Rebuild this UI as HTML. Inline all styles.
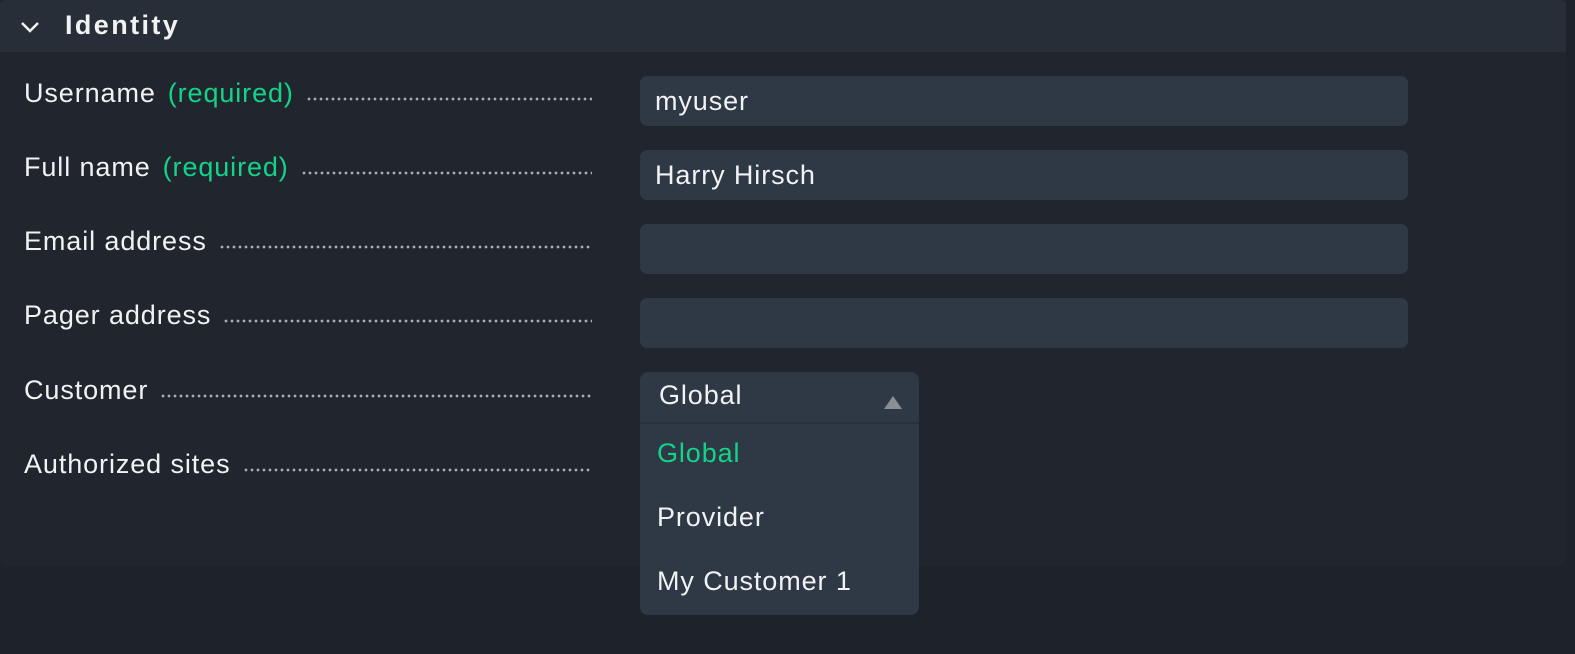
<!DOCTYPE html>
<html><head><style>
body{margin:0;width:1575px;height:654px;background:#1e2229;font-family:"Liberation Sans",sans-serif;color:#f0f2f4;overflow:hidden;position:relative}
.panel{position:absolute;left:0;top:0;width:1566px;height:566px;background:#21262e;border-radius:0 0 8px 8px}
.hdr{position:absolute;left:0;top:0;width:1566px;height:52px;background:#282e38;border-radius:6px 6px 0 0}
.hdr span{position:absolute;left:65px;top:10px;font-size:27px;font-weight:bold;letter-spacing:2.4px}
.lbl{position:absolute;left:24px;width:568px;font-size:27px;display:flex;align-items:baseline;white-space:nowrap;letter-spacing:0.9px}
.lbl .req{color:#13d389;margin-left:12px}
.lbl .dots{flex:1;margin-left:12px;height:4px;background:radial-gradient(circle,#a8adb4 1.2px,transparent 1.6px) 0 0/6px 4px repeat-x;position:relative;top:-1px}
.inp{position:absolute;left:640px;width:768px;height:50px;background:#2f3845;border-radius:7px;font-size:27px;line-height:50px;padding-left:15px;box-sizing:border-box;letter-spacing:0.9px}
.dd{position:absolute;left:640px;top:372px;width:279px;height:243px;background:#2f3845;border-radius:8px;font-size:27px;letter-spacing:0.9px}
.dd div{position:absolute;left:17px}
</style></head><body>
<div class="panel"></div>
<div class="hdr"><svg style="position:absolute;left:20px;top:20px" width="20" height="14"><path d="M2 3 L10 11 L18 3" stroke="#f0f2f4" stroke-width="2.5" fill="none"/></svg><span>Identity</span></div>
<div class="lbl" style="top:78px">Username<span class="req">(required)</span><span class="dots"></span></div>
<div class="lbl" style="top:152px">Full name<span class="req">(required)</span><span class="dots"></span></div>
<div class="lbl" style="top:226px">Email address<span class="dots"></span></div>
<div class="lbl" style="top:300px">Pager address<span class="dots"></span></div>
<div class="lbl" style="top:375px">Customer<span class="dots"></span></div>
<div class="lbl" style="top:449px">Authorized sites<span class="dots"></span></div>
<div class="inp" style="top:76px">myuser</div>
<div class="inp" style="top:150px">Harry Hirsch</div>
<div class="inp" style="top:224px"></div>
<div class="inp" style="top:298px"></div>
<div class="dd">
<div style="top:8px;left:19px">Global</div>
<svg style="position:absolute;left:244px;top:24px" width="20" height="13"><path d="M0 13 L9 0 L18 13Z" fill="#8a8f96"/></svg>
<div style="left:0;top:50px;width:279px;height:2px;background:#2a313c"></div>
<div style="top:66px;color:#13d389">Global</div>
<div style="top:130px">Provider</div>
<div style="top:194px">My Customer 1</div>
</div>
</body></html>
